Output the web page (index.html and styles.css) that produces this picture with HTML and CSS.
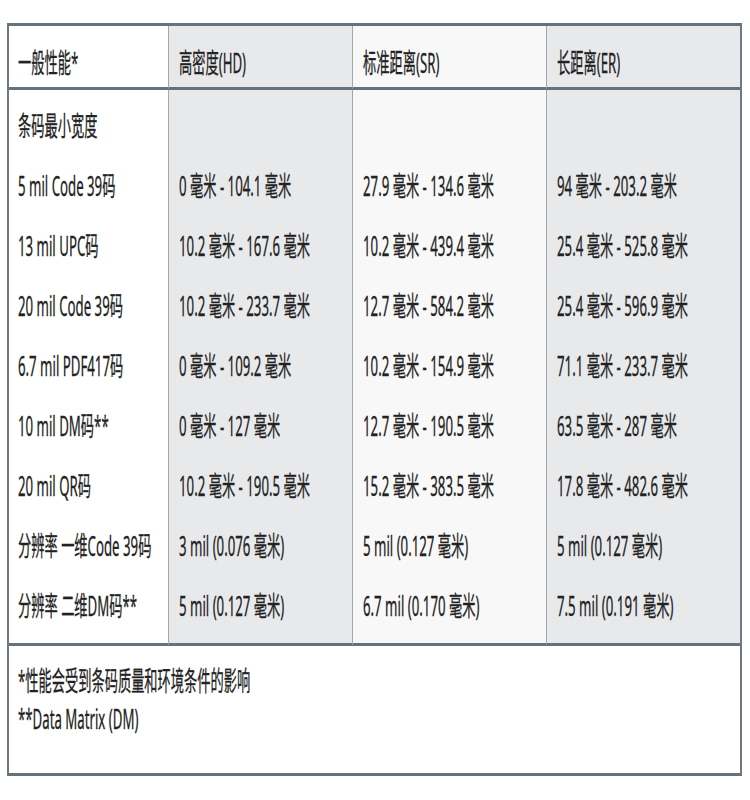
FILE: index.html
```html
<!DOCTYPE html>
<html lang="zh-CN">
<head>
<meta charset="utf-8">
<title>一般性能</title>
<link rel="stylesheet" href="styles.css">
</head>
<body>
<div class="sheet">
  <table class="spec">
    <colgroup>
      <col class="c1"><col class="c2"><col class="c3"><col class="c4">
    </colgroup>
    <thead>
      <tr>
        <th><span class="t">一般性能*</span></th>
        <th class="g"><span class="t">高密度(HD)</span></th>
        <th class="w"><span class="t">标准距离(SR)</span></th>
        <th class="g last"><span class="t">长距离(ER)</span></th>
      </tr>
    </thead>
    <tbody>
      <tr class="first">
        <td><span class="t">条码最小宽度</span></td>
        <td class="g"></td>
        <td class="w"></td>
        <td class="g last"></td>
      </tr>
      <tr>
        <td><span class="t">5 mil Code 39码</span></td>
        <td class="g"><span class="t">0 毫米 - 104.1 毫米</span></td>
        <td class="w"><span class="t">27.9 毫米 - 134.6 毫米</span></td>
        <td class="g last"><span class="t">94 毫米 - 203.2 毫米</span></td>
      </tr>
      <tr>
        <td><span class="t">13 mil UPC码</span></td>
        <td class="g"><span class="t">10.2 毫米 - 167.6 毫米</span></td>
        <td class="w"><span class="t">10.2 毫米 - 439.4 毫米</span></td>
        <td class="g last"><span class="t">25.4 毫米 - 525.8 毫米</span></td>
      </tr>
      <tr>
        <td><span class="t">20 mil Code 39码</span></td>
        <td class="g"><span class="t">10.2 毫米 - 233.7 毫米</span></td>
        <td class="w"><span class="t">12.7 毫米 - 584.2 毫米</span></td>
        <td class="g last"><span class="t">25.4 毫米 - 596.9 毫米</span></td>
      </tr>
      <tr>
        <td><span class="t">6.7 mil PDF417码</span></td>
        <td class="g"><span class="t">0 毫米 - 109.2 毫米</span></td>
        <td class="w"><span class="t">10.2 毫米 - 154.9 毫米</span></td>
        <td class="g last"><span class="t">71.1 毫米 - 233.7 毫米</span></td>
      </tr>
      <tr>
        <td><span class="t">10 mil DM码**</span></td>
        <td class="g"><span class="t">0 毫米 - 127 毫米</span></td>
        <td class="w"><span class="t">12.7 毫米 - 190.5 毫米</span></td>
        <td class="g last"><span class="t">63.5 毫米 - 287 毫米</span></td>
      </tr>
      <tr>
        <td><span class="t">20 mil QR码</span></td>
        <td class="g"><span class="t">10.2 毫米 - 190.5 毫米</span></td>
        <td class="w"><span class="t">15.2 毫米 - 383.5 毫米</span></td>
        <td class="g last"><span class="t">17.8 毫米 - 482.6 毫米</span></td>
      </tr>
      <tr>
        <td><span class="t">分辨率 一维Code 39码</span></td>
        <td class="g"><span class="t">3 mil (0.076 毫米)</span></td>
        <td class="w"><span class="t">5 mil (0.127 毫米)</span></td>
        <td class="g last"><span class="t">5 mil (0.127 毫米)</span></td>
      </tr>
      <tr class="end">
        <td><span class="t">分辨率 二维DM码**</span></td>
        <td class="g"><span class="t">5 mil (0.127 毫米)</span></td>
        <td class="w"><span class="t">6.7 mil (0.170 毫米)</span></td>
        <td class="g last"><span class="t">7.5 mil (0.191 毫米)</span></td>
      </tr>
    </tbody>
  </table>
  <div class="notes">
    <p><span class="t">*性能会受到条码质量和环境条件的影响</span></p>
    <p><span class="t">**Data Matrix (DM)</span></p>
  </div>
</div>
</body>
</html>
```
FILE: styles.css
```css
html, body {
  margin: 0;
  padding: 0;
  background: #ffffff;
}

body {
  font-family: "Noto Sans", "Noto Sans CJK SC", sans-serif;
  color: #222222;
}

.sheet {
  margin: 23px 0 0 7px;
  width: 731px;
  border-top: 3px solid #66717a;
  border-bottom: 3px solid #66717a;
  border-left: 2px solid #6e7981;
  border-right: 2px solid #6e7981;
  background: #ffffff;
  overflow: hidden;
}

.spec {
  width: 731px;
  table-layout: fixed;
  border-collapse: separate;
  border-spacing: 0;
}

.c1 { width: 160px; }
.c2 { width: 184px; }
.c3 { width: 194px; }
.c4 { width: 193px; }

.spec th,
.spec td {
  padding: 0 0 0 10px;
  text-align: left;
  vertical-align: middle;
  font-weight: normal;
  font-size: 27px;
  line-height: 32px;
  border-right: 1px solid #a3a8ac;
  white-space: nowrap;
  overflow: hidden;
}

.spec th.last,
.spec td.last {
  border-right: none;
}

.spec td:first-child,
.spec th:first-child {
  padding-left: 9px;
}

.spec thead tr {
  height: 64px;
}

.spec th {
  padding-top: 12px;
  border-bottom: 3px solid #66717a;
}

.spec tbody tr {
  height: 60px;
}

.spec tbody tr.first {
  height: 66px;
}

.spec tbody tr.first td {
  padding-top: 6px;
}

.spec tbody tr.end {
  height: 70px;
}

.spec tbody tr.end td {
  padding-bottom: 7px;
  border-bottom: 3px solid #66717a;
}

.g { background: #e8e9eb; }
.w { background: #f8f8f8; }

.t {
  display: inline-block;
  transform: scaleX(0.49);
  transform-origin: 0 50%;
  white-space: nowrap;
  -webkit-text-stroke: 0.3px #222222;
}

.notes {
  height: 127px;
  box-sizing: border-box;
  padding: 16px 0 0 9px;
  font-size: 27px;
  line-height: 38px;
  white-space: nowrap;
  overflow: hidden;
}

.notes p {
  margin: 0;
}
```
